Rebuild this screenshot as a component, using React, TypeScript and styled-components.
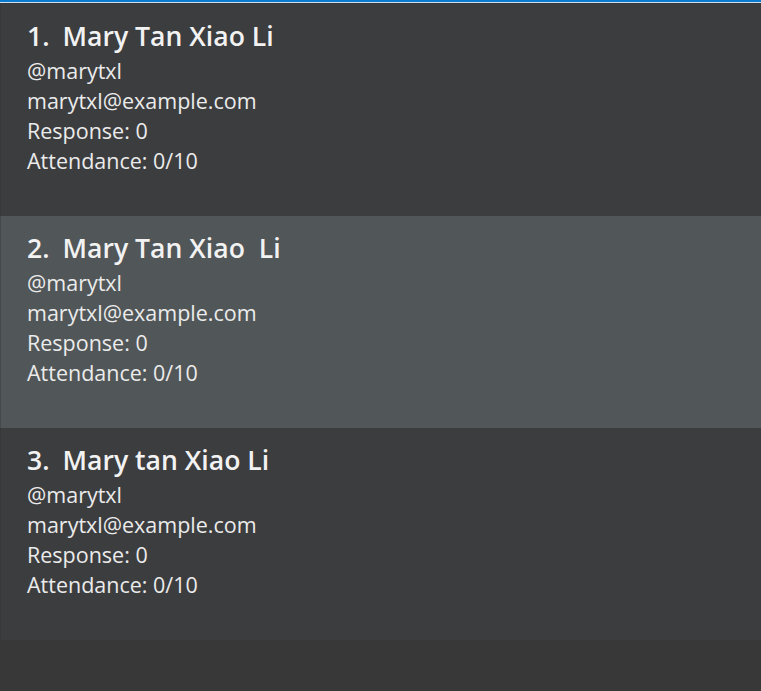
import React from "react";
import styled, { createGlobalStyle } from "styled-components";

const Global = createGlobalStyle`
  html, body { margin: 0; padding: 0; background: #383838; }
  body { font-family: "Open Sans", "Noto Sans", sans-serif; }
`;

const Page = styled.div`
  width: 761px;
  height: 691px;
  background: #383838;
  display: flex;
  flex-direction: column;
  overflow: hidden;
`;

const TopEdge = styled.div`
  height: 2px;
  background: #0a7bcf;
  border-bottom: 1px solid #cfe2f2;
  flex: none;
`;

const List = styled.div`
  display: flex;
  flex-direction: column;
  padding-top: 1px;
`;

const Card = styled.div<{ $selected?: boolean }>`
  height: 212px;
  box-sizing: border-box;
  background: ${(p) => (p.$selected ? "#515658" : "#3c3d3f")};
  border-left: 1px solid ${(p) => (p.$selected ? "#45494b" : "#37383a")};
  padding: 13px 0 0 26px;
  display: flex;
  flex-direction: column;
  color: #ececec;
`;

const NameRow = styled.div`
  display: flex;
  gap: 13px;
  font-size: 26.6px;
  font-weight: 600;
  line-height: 38px;
  height: 39px;
  white-space: pre;
  color: #f2f2f2;
`;

const Line = styled.div`
  font-size: 21.5px;
  line-height: 30px;
  color: #ebebeb;
`;

const people = [
  { idx: "1.", name: "Mary Tan Xiao Li" },
  { idx: "2.", name: "Mary Tan Xiao  Li", selected: true },
  { idx: "3.", name: "Mary tan Xiao Li" },
];

export default function App() {
  return (
    <Page>
      <Global />
      <TopEdge />
      <List>
        {people.map((p) => (
          <Card key={p.idx} $selected={p.selected}>
            <NameRow>
              <span>{p.idx}</span>
              <span>{p.name}</span>
            </NameRow>
            <Line>@marytxl</Line>
            <Line>marytxl@example.com</Line>
            <Line>Response: 0</Line>
            <Line>Attendance: 0/10</Line>
          </Card>
        ))}
      </List>
    </Page>
  );
}
